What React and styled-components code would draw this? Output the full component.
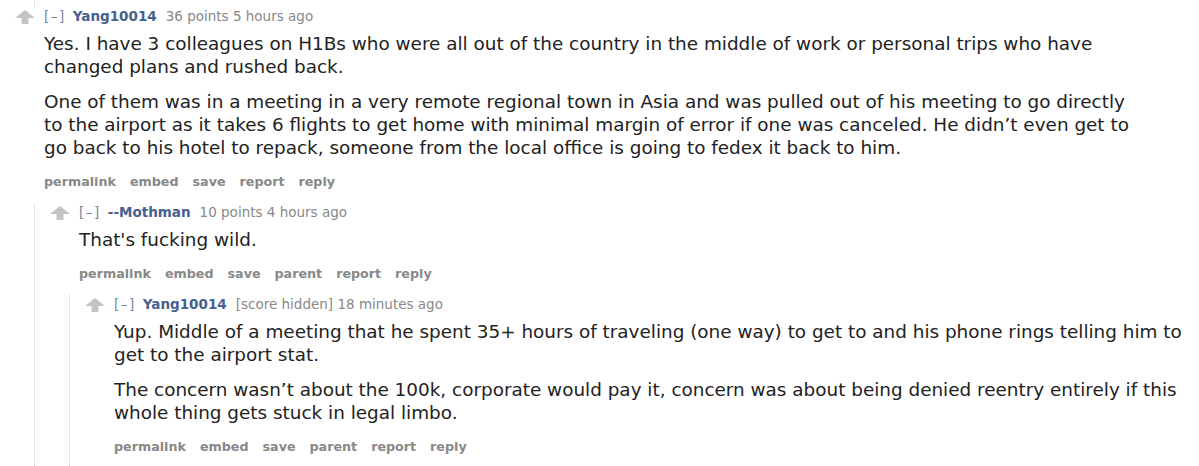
import React from "react";
import styled, { createGlobalStyle } from "styled-components";

const Global = createGlobalStyle`
  html, body { margin: 0; padding: 0; background: #fff; }
  body { font-family: "DejaVu Sans", Verdana, sans-serif; color: #222; }
`;

const Page = styled.div`
  width: 1199px;
  height: 466px;
  overflow: hidden;
  background: #fff;
`;

const PrevThread = styled.div`
  height: 7px;
  margin-left: 34px;
  border-left: 1px dotted #cfcfcf;
`;

const CommentBox = styled.div`
  display: flex;
  flex-direction: column;
  padding-bottom: ${(p) => p.$bottom || 0}px;
`;

const Row = styled.div`
  display: flex;
  align-items: flex-start;
`;

const Midcol = styled.div`
  width: 44px;
  flex: 0 0 44px;
  padding-top: 3px;
  padding-left: 15px;
  box-sizing: border-box;
  line-height: 0;
`;

const Entry = styled.div`
  display: flex;
  flex-direction: column;
  min-width: 0;
`;

const Tagline = styled.div`
  font-size: 13.5px;
  line-height: 18px;
  color: #888;
  display: flex;
  gap: 9px;
  white-space: nowrap;
`;

const Expand = styled.span`
  color: #7183a3;
  letter-spacing: 1.5px;
  margin-right: -2px;
`;

const Author = styled.span`
  color: #46608f;
  font-weight: bold;
`;

const Body = styled.div`
  max-width: 1090px;
  font-size: 18.4px;
  line-height: 23px;
  color: #222;
  padding-top: 7px;
`;

const Para = styled.p`
  margin: 0 0 12px 0;
  &:last-child { margin-bottom: 0; }
`;

const Buttons = styled.ul`
  list-style: none;
  margin: 0;
  padding: 14px 0 0 0;
  display: flex;
  gap: 14px;
  font-size: 12.7px;
  line-height: 18px;
  font-weight: bold;
  color: #888;
`;

const Child = styled.div`
  margin-left: 34px;
  margin-top: 12px;
  border-left: 1px dotted #cfcfcf;
  display: flex;
  flex-direction: column;
`;

const Arrow = () => (
  <svg width="20" height="14" viewBox="0 0 20 14">
    <polygon points="10,0 20,8 13.5,8 13.5,14 6.5,14 6.5,8 0,8" fill="#c4c4c4" />
  </svg>
);

function Comment({ author, score, time, paras, buttons, children, bottom }) {
  return (
    <CommentBox $bottom={bottom}>
      <Row>
        <Midcol>
          <Arrow />
        </Midcol>
        <Entry>
          <Tagline>
            <Expand>[–]</Expand>
            <Author>{author}</Author>
            <span>
              {score} {time}
            </span>
          </Tagline>
          <Body>
            {paras.map((t, i) => (
              <Para key={i}>{t}</Para>
            ))}
          </Body>
          <Buttons>
            {buttons.map((b) => (
              <li key={b}>{b}</li>
            ))}
          </Buttons>
        </Entry>
      </Row>
      {children && <Child>{children}</Child>}
    </CommentBox>
  );
}

export default function App() {
  return (
    <Page>
      <Global />
      <PrevThread />
      <Comment
        author="Yang10014"
        score="36 points"
        time="5 hours ago"
        paras={[
          "Yes. I have 3 colleagues on H1Bs who were all out of the country in the middle of work or personal trips who have changed plans and rushed back.",
          "One of them was in a meeting in a very remote regional town in Asia and was pulled out of his meeting to go directly to the airport as it takes 6 flights to get home with minimal margin of error if one was canceled. He didn’t even get to go back to his hotel to repack, someone from the local office is going to fedex it back to him.",
        ]}
        buttons={["permalink", "embed", "save", "report", "reply"]}
      >
        <Comment
          author="--Mothman"
          score="10 points"
          time="4 hours ago"
          paras={["That's fucking wild."]}
          buttons={["permalink", "embed", "save", "parent", "report", "reply"]}
        >
          <Comment
            author="Yang10014"
            score="[score hidden]"
            time="18 minutes ago"
            bottom={40}
            paras={[
              "Yup. Middle of a meeting that he spent 35+ hours of traveling (one way) to get to and his phone rings telling him to get to the airport stat.",
              "The concern wasn’t about the 100k, corporate would pay it, concern was about being denied reentry entirely if this whole thing gets stuck in legal limbo.",
            ]}
            buttons={["permalink", "embed", "save", "parent", "report", "reply"]}
          />
        </Comment>
      </Comment>
    </Page>
  );
}
